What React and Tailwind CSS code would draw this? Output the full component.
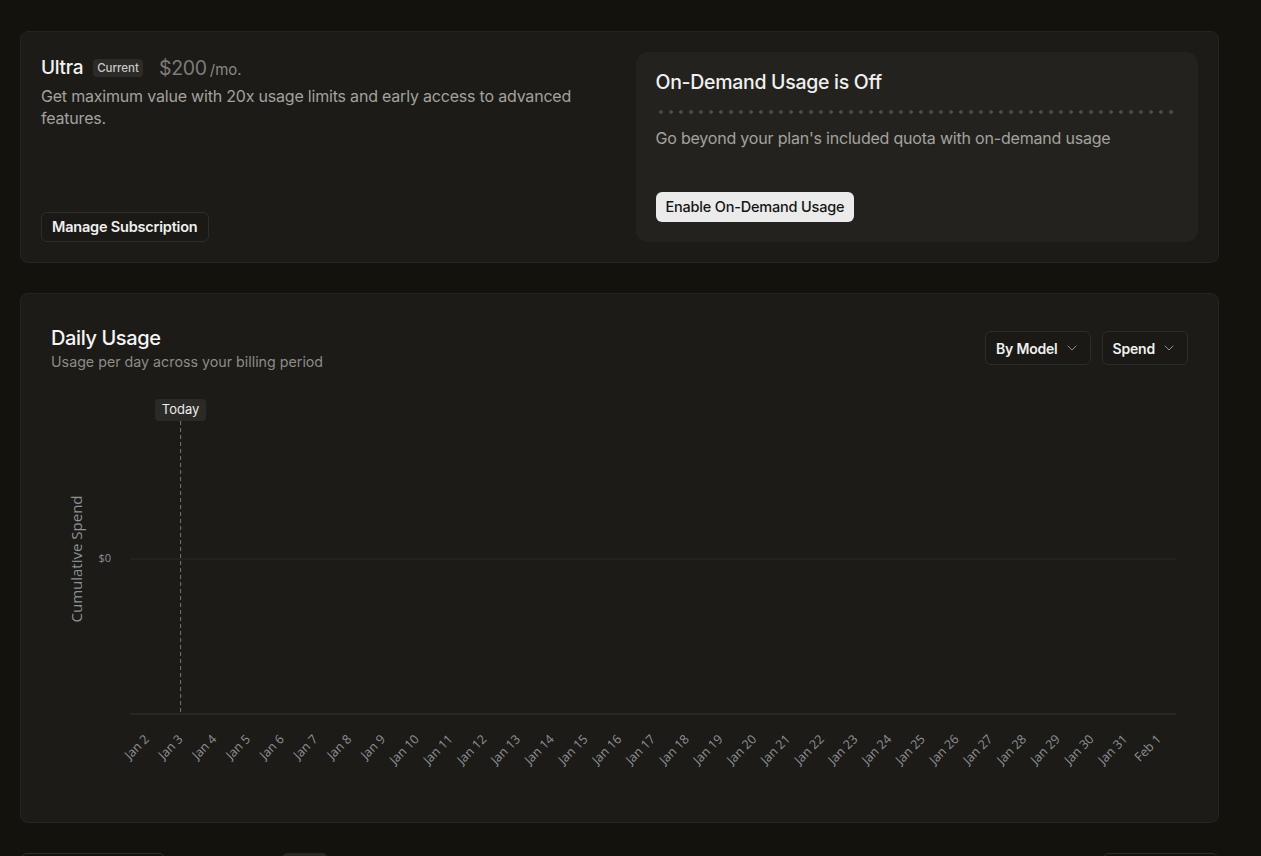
import React from "react";
import { ChevronDown } from "lucide-react";

const labels = [];
for (let d = 2; d <= 31; d++) labels.push(`Jan ${d}`);
labels.push("Feb 1");

function Chart() {
  const left = 79;
  const right = 1125;
  const band = (right - left) / labels.length;
  const todayX = left + band * 1.5;
  return (
    <svg width="1137" height="400" viewBox="0 0 1137 400" className="block">
      <text
        x="27"
        y="168"
        transform="rotate(-90 27 168)"
        textAnchor="middle"
        dominantBaseline="middle"
        fill="#8e9096"
        fontSize="15"
        fontFamily="'Open Sans', sans-serif"
      >
        Cumulative Spend
      </text>
      <text
        x="60"
        y="168"
        textAnchor="end"
        dominantBaseline="middle"
        fill="#8e9096"
        fontSize="11"
        fontFamily="'Open Sans', sans-serif"
      >
        $0
      </text>
      <line x1={left} x2={right} y1="168" y2="168" stroke="#2c2b27" strokeWidth="1" />
      <line x1={left} x2={right} y1="323" y2="323" stroke="#36352f" strokeWidth="1" />
      <line
        x1={todayX}
        x2={todayX}
        y1="30"
        y2="323"
        stroke="#777570"
        strokeWidth="1"
        strokeDasharray="4 3"
      />
      <rect x={todayX - 25.5} y="8" width="51" height="22" rx="4" fill="#2b2a26" />
      <text
        x={todayX}
        y="19.5"
        textAnchor="middle"
        dominantBaseline="middle"
        fill="#ececec"
        fontSize="13"
        fontFamily="Inter, sans-serif"
      >
        Today
      </text>
      {labels.map((l, i) => {
        const x = left + band * (i + 0.5) + 3;
        const y = 349;
        return (
          <text
            key={l}
            x={x}
            y={y}
            textAnchor="end"
            transform={`rotate(-45 ${x} ${y})`}
            fill="#8e9096"
            fontSize="12.5"
            fontFamily="'Open Sans', sans-serif"
          >
            {l}
          </text>
        );
      })}
    </svg>
  );
}

export default function App() {
  return (
    <div
      className="min-h-[856px] bg-[#14120c] pl-5 pr-[42px] pt-[31px] text-[#ececec]"
      style={{ fontFamily: "Inter, 'Noto Sans', sans-serif" }}
    >
      {/* Plan card */}
      <div className="grid grid-cols-2 gap-8 rounded-lg border border-[#25241f] bg-[#1c1b17] p-5">
        <div className="flex flex-col justify-between">
          <div className="pt-0.5">
            <div className="flex items-center">
              <span className="text-[19px] font-medium leading-7 tracking-[-0.3px] text-[#f2f2f2]">Ultra</span>
              <span className="ml-2.5 rounded-[4px] bg-[#2c2b27] px-1 py-[1px] text-[11.5px] font-medium leading-4 text-[#c9c9c9]">
                Current
              </span>
              <span className="ml-4 text-[19.5px] leading-7 tracking-[-0.3px] text-[#7d7c78]">$200</span>
              <span className="ml-[3px] mt-1 text-[15px] text-[#8a8985]">/mo.</span>
            </div>
            <p className="mt-[3px] text-[16px] leading-[22px] tracking-[-0.2px] text-[#a3a29e]">
              Get maximum value with 20x usage limits and early access to advanced features.
            </p>
          </div>
          <div>
            <button className="h-[30px] rounded-md border border-[#2e2d29] bg-[#1a1915] px-[10px] text-[14.5px] font-semibold tracking-[-0.2px] text-[#f0f0f0]">
              Manage Subscription
            </button>
          </div>
        </div>
        <div className="rounded-xl bg-[#23221e] p-5">
          <div className="text-[19.5px] font-medium leading-5 tracking-[-0.3px] text-[#f0f0f0]">On-Demand Usage is Off</div>
          <div className="mt-[18px] h-[4px] w-full bg-[radial-gradient(circle,#4a4945_1.6px,transparent_1.8px)] bg-[length:10px_4px] bg-repeat-x" />
          <p className="mt-[14px] text-[16px] leading-5 tracking-[-0.2px] text-[#a3a29e]">
            Go beyond your plan's included quota with on-demand usage
          </p>
          <button className="mt-[44px] h-[30px] rounded-md bg-[#ebebeb] px-[10px] text-[14.5px] font-medium tracking-[-0.2px] text-[#141414]">
            Enable On-Demand Usage
          </button>
        </div>
      </div>

      {/* Daily usage card */}
      <div className="mt-[30px] rounded-lg border border-[#25241f] bg-[#1c1b17] px-[30px] pb-[31px] pt-[30px]">
        <div className="flex items-center justify-between">
          <div>
            <div className="text-[20px] font-medium leading-7 tracking-[-0.4px] text-[#f5f5f5]">Daily Usage</div>
            <div className="text-[14.25px] leading-5 text-[#8c8b87]">Usage per day across your billing period</div>
          </div>
          <div className="flex items-center gap-[11px]">
            <button className="flex h-[34px] items-center gap-1.5 rounded-md border border-[#2e2d29] bg-[#1a1915] px-[10px] text-[14px] font-semibold tracking-[-0.2px] text-[#f0f0f0]">
              By Model
              <ChevronDown size={16} strokeWidth={1.5} className="text-[#8f8e8a]" />
            </button>
            <button className="flex h-[34px] items-center gap-1.5 rounded-md border border-[#2e2d29] bg-[#1a1915] px-[10px] text-[14px] font-semibold tracking-[-0.2px] text-[#f0f0f0]">
              Spend
              <ChevronDown size={16} strokeWidth={1.5} className="text-[#8f8e8a]" />
            </button>
          </div>
        </div>
        <div className="mt-[19px]">
          <Chart />
        </div>
      </div>

      {/* Next row (cut off) */}
      <div className="mt-[30px] flex items-start">
        <div className="ml-px h-8 w-[144px] rounded-md border border-[#2e2d29]" />
        <div className="ml-[117px] h-8 w-[46px] rounded-md bg-[#2a2822]" />
        <div className="ml-auto mr-px h-8 w-[115px] rounded-md border border-[#2e2d29]" />
      </div>
    </div>
  );
}
